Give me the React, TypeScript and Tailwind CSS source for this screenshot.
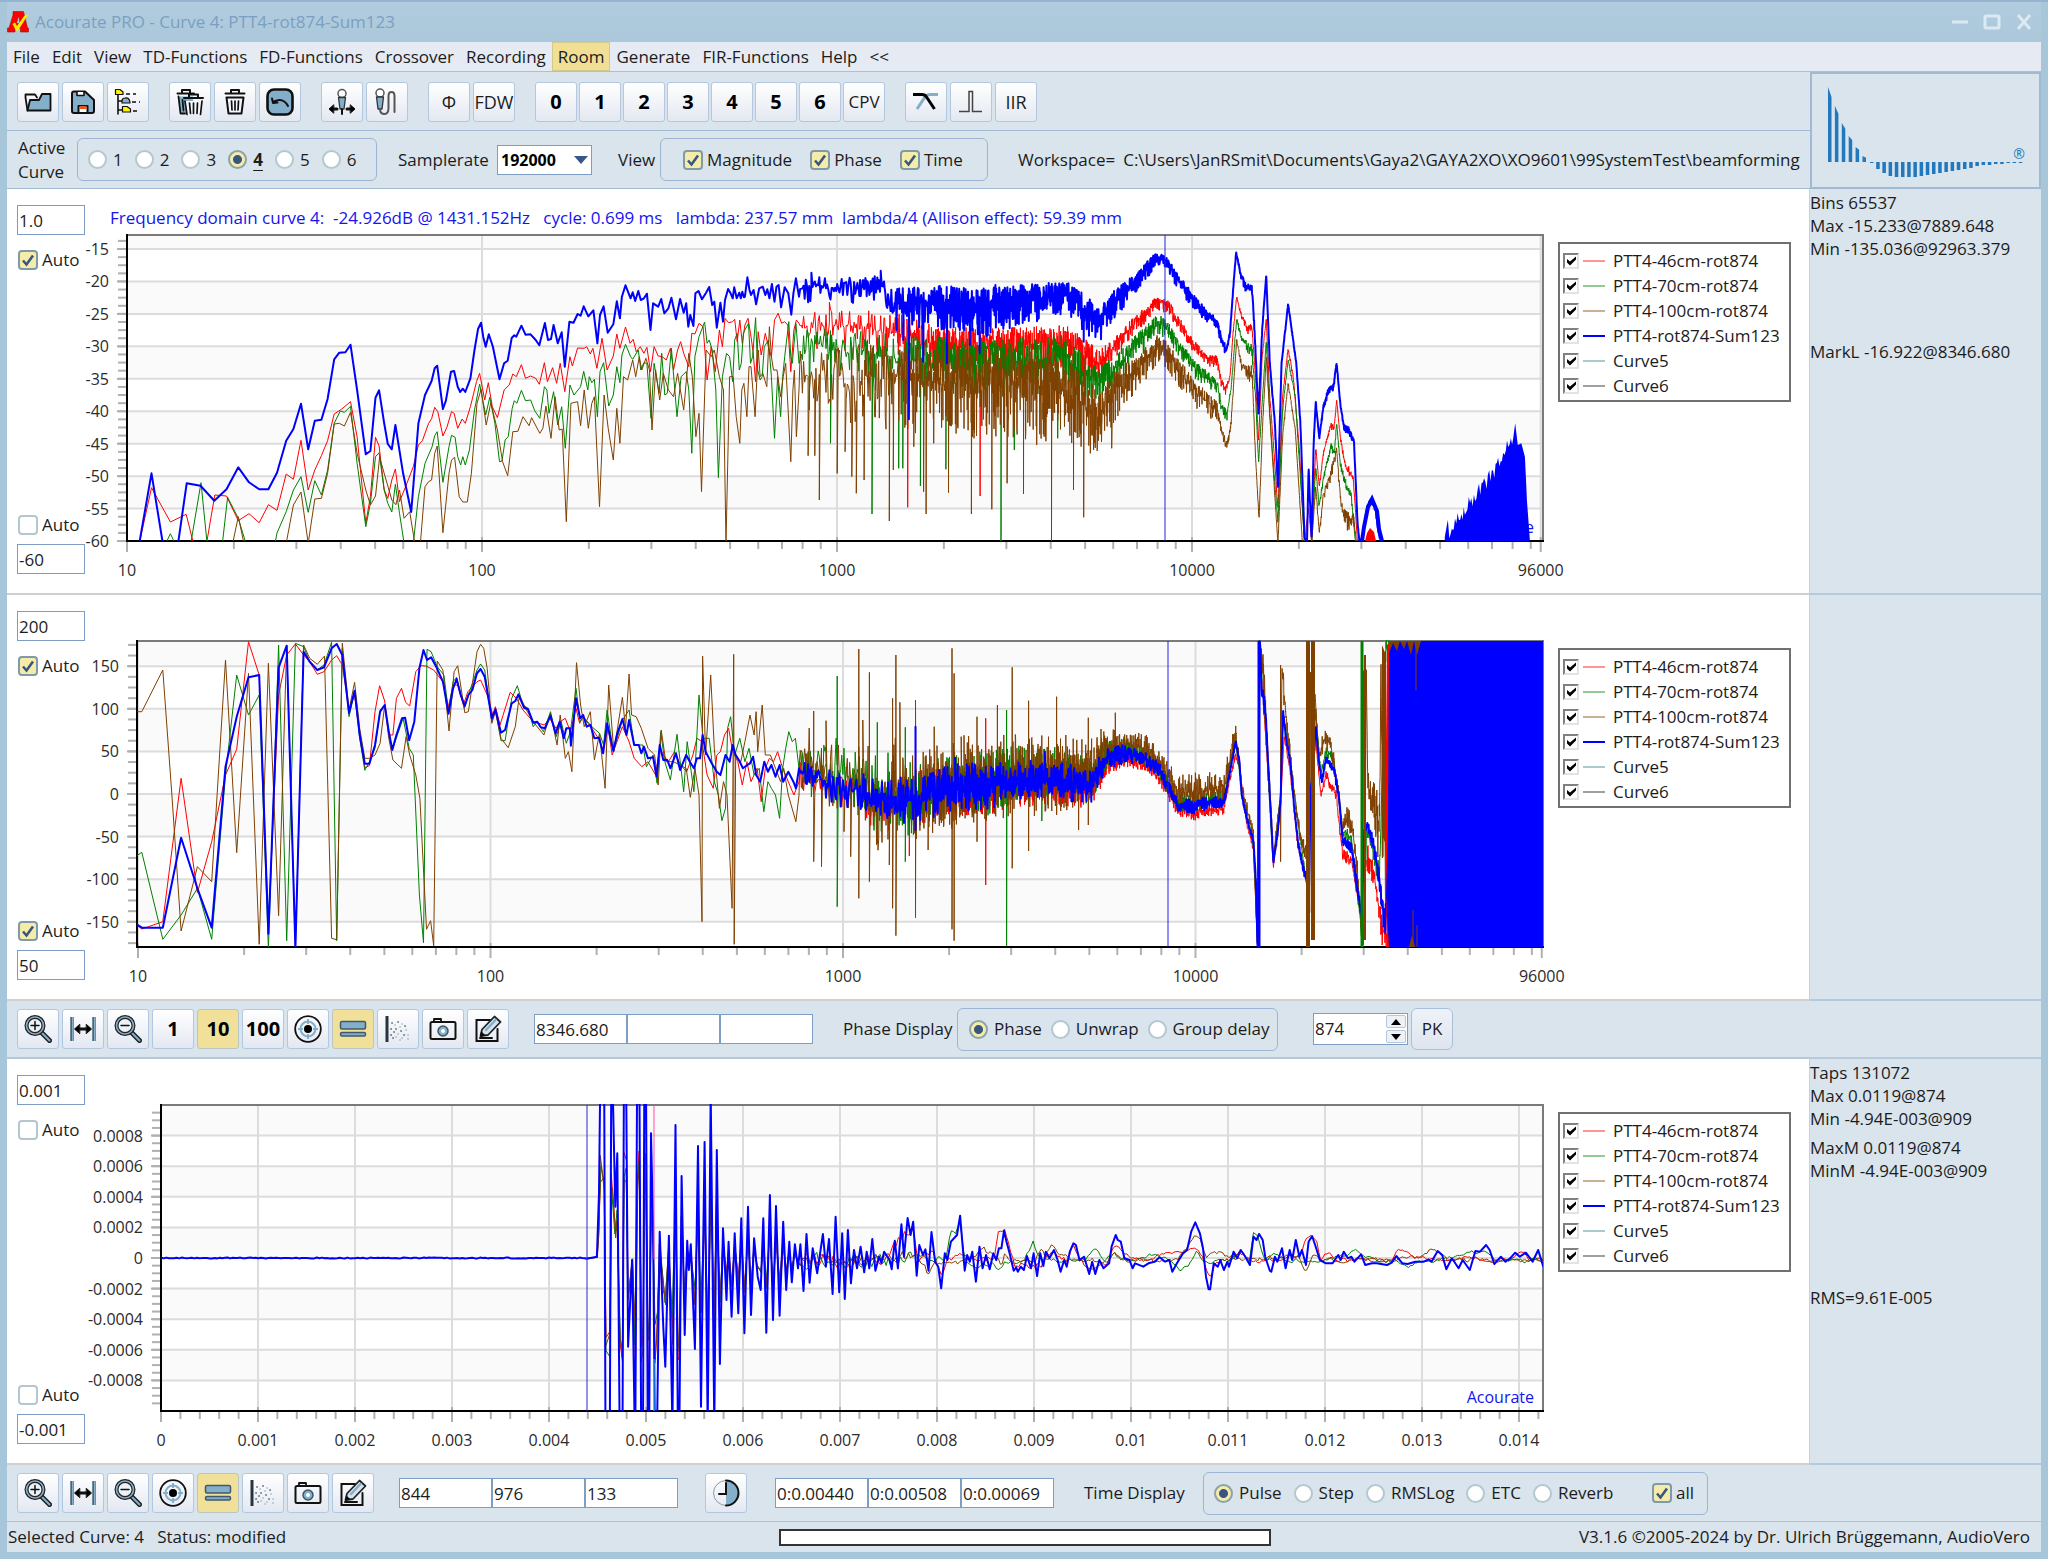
import React, { useState } from "react";

type Pt = [number, number];

/* ------------------------------------------------------------------ */
/* Curve data                                                          */
/* ------------------------------------------------------------------ */

/** Parses "x,y x,y ..." into a list of points. */
const parse = (s: string): number[][] =>
  s.trim().split(/\s+/).map((p) => p.split(",").map(Number));

/** Small seeded generator, so that the noise floor is stable. */
function rng(seed: number) {
  let a = seed;
  return () => {
    a = (a + 0x6d2b79f5) | 0;
    let t = Math.imul(a ^ (a >>> 15), 1 | a);
    t = (t + Math.imul(t ^ (t >>> 7), 61 | t)) ^ t;
    return ((t ^ (t >>> 14)) >>> 0) / 4294967296;
  };
}

/** Raw samples are stored on a fine grid; these bring them to chart units. */
const GX = 1.96;
const GY = 3;
const place = (pts: number[][], dx: number, dy: number): Pt[] =>
  pts.map(([x, y]) => [x / GX + dx, y / GY + dy]);

const toPath = (pts: Pt[]) =>
  pts.map(([x, y], i) => `${i ? "L" : "M"}${x.toFixed(1)} ${y.toFixed(1)}`).join("");

/** The upper half of each curve continues where the lower half stops. */
const SEAM = 38;
const afterSeam = (pts: number[][]) => pts.filter(([x]) => x >= SEAM);

/** Noise in -1..1: "dips" has a long tail downwards, "even" has one on both sides. */
type Shape = "dips" | "even" | "flat";
const shaped = (n: number, shape: Shape) => {
  if (shape === "flat") return n;
  if (shape === "dips") return n > 0 ? Math.pow(n, 2.4) * 1.5 : -Math.pow(-n, 1.3);
  return n * Math.abs(n) * 1.35;
};

/** Walks an envelope of "x,centre,amplitude" and adds noise and spikes. */
function band(env: string, seed: number, shape: Shape, spikes = ""): number[][] {
  const e = parse(env);
  const sp = spikes ? parse(spikes).sort((a, b) => a[0] - b[0]) : [];
  const rand = rng(seed);
  const out: number[][] = [];
  let k = 0;
  let s = 0;
  let prev = 0;
  let x = e[0][0];
  const end = e[e.length - 1][0];
  while (x <= end) {
    while (k < e.length - 2 && e[k + 1][0] < x) k++;
    const [x0, c0, a0 = 4] = e[k];
    const [x1, c1, a1 = 4] = e[k + 1];
    const t = x1 === x0 ? 0 : (x - x0) / (x1 - x0);
    const n = shaped(rand() * 2 - 1, shape);
    prev = shape === "flat" ? prev * 0.4 + n * 0.8 : n;
    out.push([x, c0 + (c1 - c0) * t + prev * (a0 + (a1 - a0) * t)]);
    while (s < sp.length && sp[s][0] <= x) {
      sp[s].slice(1).forEach((y) => out.push([x, y]));
      s++;
    }
    if (shape === "flat") x += 4;
    else x += x < 150 ? 2.2 : x < 230 ? 1.3 : x < 300 ? 0.8 : 0.5;
  }
  return afterSeam(out);
}

const MAG_BLUE = `273,1060 297,850 319,1060 349,1060 366,880 393,887 420,932 444,898 467,832 488,877 508,898 526,898 543,848 561,752 575,717 590,641 604,778 617,692 630,689 642,627 655,508 665,488 677,487 687,464 700,600 717,793 726,783 736,623 743,601 753,700 760,762 768,778 775,705 790,850 806,966 820,700 833,615 846,573 852,535 857,527 868,657 874,632 884,545 890,543 897,590 902,606 907,596 912,606 922,565 930,480 937,416 943,398 947,440 952,470 958,433 966,470 979,568 988,520 995,512 1003,444 1008,436 1012,440 1022,407 1030,434 1040,433 1050,450 1057,466 1068,399 1074,450 1080,447 1085,405 1093,460 1101,427 1107,530 1116,395 1124,398 1132,372 1138,377 1144,349 1153,379 1163,361 1171,460 1176,375 1183,349 1191,428 1202,403 1209,334 1215,385 1219,320 1226,286 1236,325 1240,307 1245,333 1251,303 1256,330 1262,325 1268,311 1275,420 1280,340 1290,350 1296,327 1302,370 1310,355 1316,323 1325,388 1333,327 1340,368 1345,340 1349,410 1353,375 1359,408 1363,310 1369,303 1376,328 1384,308 1390,291 1396,345 1400,335 1405,413 1412,338 1417,395 1421,330 1427,297 1432,310 1436,325 1439,292 1444,325 1449,308 1452,325 1455,305 1458,322 1460,320 1465,262 1469,300 1472,315 1477,300 1482,343 1488,295 1495,290 1500,315 1504,298 1508,325 1513,282 1518,335 1522,290 1526,285 1531,352 1538,292 1545,310 1551,374 1555,310 1560,265 1566,320`;
const MAG_RED = `273,1060 297,893 334,996 365,973 379,1060 405,1060 421,915 444,918 467,992 488,971 508,998 526,944 543,961 561,852 575,868 590,751 604,900 617,840 630,797 642,752 655,672 670,657 687,635 700,740 717,1000 726,920 736,742 743,768 753,900 760,925 768,870 775,837 783,935 795,890 810,830 820,765 828,752 840,700 846,686 852,652 858,665 868,738 876,712 885,665 890,670 897,715 906,687 912,700 922,650 934,575 940,550 950,630 957,578 965,650 975,683 988,600 998,585 1005,552 1012,560 1022,524 1030,565 1040,558 1050,565 1057,583 1067,518 1073,575 1083,533 1091,580 1098,520 1107,605 1117,500 1122,528 1132,474 1145,475 1150,470 1157,492 1162,475 1170,535 1180,445 1190,540 1202,498 1209,432 1215,475 1226,411 1235,460 1241,448 1247,485 1255,470 1262,490 1268,472 1275,545 1282,470 1290,498 1298,500 1306,510 1314,475 1320,540 1328,480 1334,455 1340,490 1350,530 1356,430 1362,432 1370,400 1378,410 1386,570 1394,470 1402,545 1410,420 1416,470 1421,385 1428,398 1436,395 1440,388 1445,455 1450,390 1455,460 1460,405 1466,385 1471,430 1476,485 1481,575 1486,425 1492,495 1500,430 1506,470 1512,500 1518,390 1525,370 1532,400 1538,395 1544,405 1550,545 1556,420 1561,390 1566,400`;
const MAG_GREEN = `325,1060 334,1031 343,1060 374,1060 394,878 406,1060 436,1060 446,922 467,985 482,1060 539,1060 543,1029 561,965 575,900 590,860 604,967 617,872 630,915 642,840 655,700 667,663 675,667 687,649 700,820 717,1010 726,940 736,800 743,788 753,900 760,940 768,966 775,883 783,970 792,1060 810,1060 820,920 833,820 847,770 852,737 857,725 868,877 880,770 885,736 892,742 897,800 903,825 907,800 912,825 920,780 930,660 940,582 952,675 960,622 970,700 979,815 984,813 990,750 996,740 1004,655 1008,632 1013,640 1022,601 1030,632 1040,630 1048,662 1058,685 1067,590 1072,600 1076,670 1085,605 1093,705 1101,650 1108,775 1117,585 1125,615 1138,590 1144,544 1152,600 1155,560 1160,578 1165,568 1171,680 1176,545 1183,518 1193,648 1202,615 1209,530 1215,578 1219,495 1226,463 1236,500 1240,508 1251,480 1256,540 1262,518 1268,520 1276,685 1282,520 1292,610 1297,490 1303,615 1308,610 1316,475 1327,680 1335,560 1345,545 1350,600 1356,790 1362,500 1370,440 1381,396 1386,460 1390,450 1396,480 1403,600 1408,863 1416,560 1424,490 1430,500 1436,575 1440,450 1445,430 1449,540 1453,520 1457,430 1460,420 1467,400 1471,520 1475,500 1481,383 1485,540 1490,570 1494,560 1498,470 1506,450 1512,560 1518,745 1524,560 1530,680 1534,560 1538,500 1546,395 1550,500 1553,520 1560,400 1566,520`;
const MAG_BROWN = `456,1060 467,980 478,1060 561,1060 575,945 590,906 604,1060 617,927 630,925 642,850 655,702 665,700 675,708 687,667 700,790 717,900 726,945 736,918 744,802 753,850 768,930 776,944 783,900 792,985 803,965 813,1060 824,1060 833,890 840,875 846,870 852,790 857,768 868,1028 880,850 885,810 891,802 900,920 907,936 916,936 924,850 935,640 943,598 953,705 962,638 975,720 985,815 995,857 1005,725 1015,724 1025,680 1037,707 1042,683 1058,730 1064,715 1070,648 1080,745 1088,620 1096,720 1102,717 1110,995 1119,640 1132,635 1138,707 1145,600 1153,715 1160,640 1165,620 1175,950 1184,615 1192,715 1202,810 1209,655 1215,760 1222,560 1230,570 1240,510 1246,560 1253,500 1258,540 1266,505 1273,540 1278,720 1285,540 1293,630 1300,550 1310,600 1320,620 1328,550 1340,660 1350,490 1357,560 1364,740 1370,670 1375,905 1384,480 1394,500 1400,480 1410,560 1418,600 1423,1060 1430,560 1437,560 1443,680 1450,760 1454,600 1458,580 1464,680 1468,530 1472,530 1480,680 1486,480 1490,560 1495,550 1503,590 1508,410 1512,500 1516,540 1523,540 1530,620 1535,560 1540,520 1550,815 1554,600 1557,540 1561,740 1566,600`;

const MAG_BLUE_HI = `0,310,30 60,290,30 110,295,32 200,290,35 215,340,55 330,340,52 400,355,60 470,335,50 560,315,40 585,340,45 600,370,48 625,390,45 660,330,35 700,270,22 737,203,18 755,210,16 780,270,18 810,330,18 840,380,14 857,395,12 866,460,14 875,478,10 882,430,6 888,300,4 894,187,2 903,255,8 915,295,12 925,290,10 930,420,8 938,680,5 945,420,5 953,255,3 960,520,5 970,700,5 976,900,5 983,520,4 996,342,3 1003,420,4 1012,520,4 1020,700,4 1028,1040,4 1033,1060,2 1036,830,4 1042,1050,4 1046,760,4 1050,635,4 1057,745,4 1065,650,6 1075,600,8 1085,590,8 1091,518,3 1098,640,4 1105,710,8 1115,720,8 1125,755,6 1132,1000,3 1136,1060,1 1142,1040,6 1150,960,10 1157,930,6 1167,955,6 1173,1030,6 1180,1060,1`;
const MAG_RED_HI = `0,420,50 100,405,50 220,425,60 300,460,55 400,475,60 560,455,50 600,495,48 625,520,38 660,460,34 700,395,22 740,335,18 760,345,18 810,465,17 840,510,14 857,510,14 866,580,14 873,600,10 882,560,5 888,430,5 895,320,4 905,380,6 917,415,12 925,410,8 932,560,6 938,760,6 945,500,5 953,385,5 960,620,6 968,780,6 976,960,5 985,620,5 996,475,5 1006,560,5 1018,780,5 1028,1060,5 1036,950,5 1042,1060,5 1050,770,5 1057,890,6 1065,790,8 1080,705,9 1086,715,8 1091,630,4 1098,740,5 1108,830,12 1115,840,12 1124,870,8 1132,1060,2`;
const MAG_GREEN_HI = `0,490,65 100,480,65 250,510,75 400,520,75 560,505,70 600,555,60 625,585,50 660,530,42 700,465,34 740,400,28 760,415,26 810,530,22 857,585,18 866,655,14 876,675,14 884,600,6 895,385,5 905,450,8 925,480,18 932,620,6 938,820,6 945,640,5 953,450,5 960,680,6 976,1000,6 985,660,6 996,510,5 1010,620,5 1028,1060,5 1042,1060,4 1050,830,6 1057,950,8 1065,860,10 1080,770,12 1086,790,10 1091,700,6 1098,820,8 1110,890,16 1120,920,12 1128,1060,2`;
const MAG_BROWN_HI = `0,560,90 100,550,95 250,570,105 400,580,112 560,600,105 600,655,100 625,685,75 660,595,60 700,540,42 740,470,36 760,490,36 810,600,34 857,660,26 866,730,18 876,770,12 884,700,8 895,450,5 905,530,10 925,550,24 932,800,8 939,990,8 946,700,6 953,500,6 965,800,6 976,1060,4 985,740,6 996,580,6 1010,720,6 1024,1060,4 1042,1060,4 1050,890,6 1057,1030,8 1065,920,14 1080,850,16 1091,780,8 1100,950,16 1112,990,25 1124,980,12 1130,1060,2`;

const PH_BLUE = `268,988 278,998 319,998 355,728 387,880 415,998 442,515 464,365 487,247 508,240 526,1016 546,218 562,152 579,1060 595,170 607,200 622,225 635,217 650,160 660,147 671,180 684,354 695,287 705,420 715,506 724,506 735,450 745,350 754,330 762,410 769,465 777,420 788,370 794,368 802,436 812,380 822,220 830,165 837,195 845,187 855,215 868,260 879,356 888,280 895,252 903,300 911,333 918,300 926,285 935,235 942,222 950,245 964,370 971,343 982,413 990,405 1003,325 1010,318 1016,298 1027,338 1035,343 1045,383 1053,380 1060,397 1068,400 1079,362 1089,415 1097,380 1105,430 1110,400 1117,400 1119,452 1129,310 1137,370 1143,360 1150,395 1157,390 1165,430 1174,428 1182,475 1190,385 1202,467 1210,415 1220,372 1228,420 1233,375 1243,450 1252,450 1257,475 1262,455 1270,490 1280,487 1287,545 1293,450 1300,495 1308,495 1314,520 1325,475 1333,525 1345,480 1352,500 1360,520 1366,490 1372,490 1377,420 1383,470 1395,505 1405,530 1412,540 1422,480 1430,500 1436,450 1442,480 1450,500 1456,520 1465,510 1470,505 1476,485 1482,540 1490,560 1498,500 1505,530 1512,510 1520,545 1528,510 1535,560 1545,530 1555,560 1560,580 1566,520`;
const PH_RED = `268,990 278,1002 319,980 355,550 387,893 415,740 442,540 464,463 487,140 508,240 526,1000 546,300 562,180 579,147 595,180 607,200 622,238 635,230 650,195 660,182 671,210 684,345 695,300 705,420 715,518 724,512 735,350 744,272 754,318 762,420 770,420 777,310 787,280 795,322 803,333 815,230 825,212 835,213 850,225 868,260 879,335 888,270 897,270 908,330 917,290 935,260 942,255 955,300 966,360 971,335 980,390 1000,292 1012,310 1025,345 1045,380 1067,390 1077,370 1090,400 1098,380 1108,370 1118,410 1129,340 1136,385 1143,365 1160,400 1175,435 1182,465 1192,400 1200,480 1220,395 1233,440 1243,490 1258,515 1270,500 1285,540 1293,460 1300,480 1310,500 1322,470 1334,510 1346,530 1358,480 1366,430 1376,440 1386,540 1398,580 1405,480 1412,470 1420,420 1428,400 1436,470 1446,500 1455,570 1464,500 1472,560 1484,520 1492,620 1500,520 1508,490 1516,500 1524,470 1532,510 1545,560 1556,600 1566,560`;
const PH_GREEN = `268,782 278,772 319,1033 355,960 387,880 415,1033 442,540 464,240 487,360 508,300 526,1060 546,150 562,1037 579,145 595,155 607,200 622,225 635,210 650,142 660,1037 671,160 684,365 695,290 705,430 715,526 724,500 735,460 745,345 754,330 762,410 769,465 790,370 802,460 810,480 822,900 830,1043 837,163 845,170 857,215 870,240 879,350 888,260 895,247 910,340 920,290 935,225 942,207 950,225 964,380 971,345 982,437 990,437 1003,310 1014,272 1025,330 1035,340 1045,395 1053,380 1065,410 1079,350 1090,425 1100,380 1110,445 1118,410 1129,280 1137,380 1143,365 1160,395 1175,415 1183,450 1190,345 1202,470 1220,375 1233,345 1243,450 1260,450 1267,515 1280,480 1288,565 1295,410 1303,500 1314,555 1327,418 1340,590 1347,440 1360,590 1370,300 1378,430 1390,430 1400,560 1408,600 1415,677 1422,640 1426,400 1432,365 1440,480 1450,430 1460,500 1468,460 1478,540 1488,520 1497,650 1505,560 1512,580 1520,600 1528,670 1534,520 1540,460 1546,410 1553,440 1559,430 1566,520`;
const PH_BROWN = `268,350 278,350 319,225 337,600 355,1008 387,815 415,860 442,195 464,773 487,235 508,1048 526,205 546,962 562,150 579,1060 595,150 607,190 622,208 636,183 650,1030 660,1034 671,145 684,345 695,262 705,400 715,490 724,490 735,480 745,445 754,330 762,430 770,495 787,520 796,425 803,480 815,540 823,610 836,1003 844,977 850,1052 857,198 868,225 880,408 890,230 897,212 911,353 918,350 935,170 942,148 948,160 955,220 964,385 971,350 982,430 996,458 1010,395 1018,300 1030,340 1045,380 1066,420 1079,355 1092,450 1098,360 1108,490 1114,470 1121,530 1130,203 1138,330 1145,395 1157,350 1165,495 1175,415 1186,580 1193,270 1203,470 1220,307 1226,400 1233,237 1238,360 1247,365 1257,400 1270,460 1283,480 1290,570 1296,405 1305,500 1320,500 1345,520 1353,607 1362,520 1370,600 1376,980 1377,183 1383,480 1393,240 1400,460 1410,640 1418,560 1425,600 1435,940 1438,178 1439,1048 1442,480 1452,500 1460,440 1470,360 1478,420 1482,350 1485,470 1494,330 1500,480 1510,480 1520,520 1530,560 1536,520 1545,600 1560,680 1566,600`;

const PH_BLUE_HI = `0,545,30 50,530,35 120,585,38 200,600,50 270,620,55 340,570,55 400,580,52 480,550,42 560,560,42 610,570,42 640,490,24 680,475,20 720,495,17 745,530,16 765,590,14 780,630,14 810,635,16 840,625,14 870,620,12 882,530,8 893,440,5 900,490,5 905,600,6 915,670,6 928,740,6 933,860,6 936,1060,3 938,1060,2 939,140,2 941,140,2 944,300,8 948,310,20 952,360,8 960,600,8 967,800,5 975,720,8 981,620,8 986,350,5 992,430,8 1000,500,8 1008,640,8 1015,740,10 1025,820,10 1033,850,10 1036,960,8 1040,600,10 1046,490,8 1050,390,6 1056,500,8 1062,560,8 1070,490,8 1085,520,10 1095,600,12 1103,740,12 1120,760,12 1130,860,15 1140,960,8 1145,720,12 1152,690,10 1165,760,18 1175,860,22 1185,990,30 1192,900,40`;
const PH_RED_HI = `0,550,40 60,540,50 120,590,45 200,630,60 270,610,65 340,590,55 400,590,55 480,570,45 610,580,45 640,505,28 680,492,18 720,515,16 745,550,16 765,605,16 780,645,16 810,655,17 840,645,15 870,640,14 882,550,8 893,480,8 900,510,6 915,690,8 928,760,8 936,1060,4 939,140,2 948,330,20 960,620,8 967,820,5 981,640,8 988,420,8 1000,530,8 1015,750,10 1033,870,10 1040,640,12 1050,430,8 1060,600,12 1070,540,12 1090,600,16 1103,780,14 1120,795,14 1138,960,8 1146,800,12 1155,790,40 1165,850,30 1180,1000,40 1195,1050,10`;
const PH_GREEN_HI = `0,470,50 30,470,50 60,530,60 120,530,80 200,600,100 270,610,85 340,560,70 400,560,80 480,530,60 560,540,60 610,560,50 640,470,36 680,465,26 720,485,24 745,530,18 780,620,22 810,625,24 870,610,18 893,430,10 905,600,8 928,750,8 936,1060,4 939,140,2 948,300,60 967,800,6 981,600,10 986,350,8 1000,500,10 1033,880,10 1040,600,10 1050,350,10 1060,540,10 1070,470,12 1085,490,12 1103,710,14 1120,730,14 1138,980,10 1141,1060,2 1142,130,2 1143,1060,2 1150,700,15 1175,850,30 1187,160,30 1195,150,30`;
const PH_BROWN_HI = `0,590,50 30,600,60 50,470,80 120,560,90 150,560,90 200,620,120 235,560,105 270,620,105 340,560,105 400,550,95 480,540,95 560,540,80 610,530,75 640,450,50 680,450,36 720,460,34 745,510,28 780,590,42 810,590,42 870,580,38 893,410,25 905,580,20 928,720,15 936,1060,4 939,140,2 948,250,50 960,580,10 967,780,10 981,600,10 984,230,15 988,300,40 1000,480,15 1015,690,20 1033,790,25 1036,140,4 1038,1040,10 1040,140,4 1042,1050,10 1044,140,4 1046,1050,4 1048,280,30 1056,480,20 1068,430,24 1080,450,24 1095,600,20 1103,690,20 1112,665,24 1122,700,24 1132,830,24 1141,1060,4 1144,140,2 1146,1020,30 1149,200,30 1152,560,30 1165,640,60 1175,700,90 1178,160,20 1181,860,150 1184,180,40 1187,1000,30 1192,160,30`;

const TIME_BLUE = `1150,596 1170,590 1174,400 1177,0 1184,0 1187,1200 1195,1200 1198,100 1201,100 1206,440 1210,280 1215,1200 1220,1200 1223,0 1227,0 1231,860 1239,600 1245,1200 1249,0 1253,0 1257,1200 1260,1200 1263,0 1266,0 1270,1200 1272,1200 1276,220 1280,500 1284,1200 1288,1100 1293,515 1300,800 1304,920 1311,527 1318,1100 1324,195 1329,1200 1331,1200 1336,348 1342,825 1347,542 1350,630 1354,553 1362,867 1368,258 1374,1040 1381,246 1387,1100 1393,100 1400,1100 1405,270 1411,912 1417,505 1424,720 1428,545 1434,770 1440,520 1447,760 1453,475 1459,820 1466,440 1472,765 1478,535 1485,650 1491,690 1496,475 1502,818 1509,405 1515,780 1521,438 1528,767 1535,485 1541,690 1547,545 1552,667 1558,553 1564,625`;
const TIME_BLUE_HI = `40,553 46,693 52,522 58,668 64,565 73,640 84,522 90,620 96,537 103,702 109,470 116,697 122,520 127,717 133,510 139,670 145,570 151,625 158,560 165,637 170,575 175,625 181,537 187,632 194,590 199,610 204,575 215,600 219,628 225,542 231,625 238,493 243,590 250,474 256,525 261,485 268,647 273,555 280,585 285,568 291,632 297,516 304,605 310,620 316,685 323,580 328,600 335,545 347,525 353,467 358,560 362,632 367,585 372,605 377,575 384,665 391,560 397,625 404,585 411,628 418,580 424,600 429,565 434,565 439,512 444,545 450,580 458,632 463,622 466,635 472,620 478,630 484,588 492,625 497,580 504,648 510,580 516,618 521,575 528,595 537,570 544,600 550,635 557,600 562,620 568,575 575,550 580,555 587,600 596,590 606,642 612,605 618,642 626,600 634,625 645,610 650,560 658,525 662,540 668,545 675,595 685,600 691,625 696,610 712,620 722,610 734,605 744,592 755,605 763,600 769,635 778,610 790,580 798,570 806,515 814,487 823,520 829,565 835,650 840,688 843,688 850,610 858,620 863,600 870,630 877,605 880,620 889,575 896,595 903,570 912,590 921,615 928,530 934,540 939,522 946,540 951,590 960,632 963,635 970,590 975,605 984,565 991,625 999,570 1004,600 1011,540 1018,590 1023,570 1031,615 1036,545 1043,528 1050,560 1058,600 1070,610 1083,610 1094,585 1099,600 1105,575 1113,595 1120,590 1126,605 1139,583 1147,615 1160,610 1170,610 1178,612 1190,615 1199,608 1208,588 1220,610 1230,612 1245,605 1262,605 1271,598 1277,605 1289,573 1298,585 1306,628 1317,595 1330,625 1338,600 1352,630 1363,573 1372,575 1384,555 1391,570 1400,612 1413,590 1422,605 1431,595 1441,578 1450,590 1462,578 1475,605 1486,570 1496,620`;
const TIME_RED_HI = `0,600,30 100,600,25 200,595,20 240,530,20 260,510,10 270,600,14 300,570,14 315,640,8 330,600,12 350,580,8 370,600,10 400,600,12 420,590,10 428,518,4 440,508,5 450,560,8 460,620,8 480,610,14 490,625,10 510,615,14 530,580,10 560,600,10 575,555,5 590,600,10 610,635,8 640,610,8 650,570,6 660,560,6 675,575,6 690,600,8 720,600,8 760,575,5 790,580,5 815,562,5 828,590,5 842,652,5 855,605,8 880,600,8 900,575,6 925,605,8 960,605,8 1000,595,9 1020,590,8 1030,535,5 1040,522,4 1052,545,6 1060,600,6 1075,575,5 1100,605,14 1130,600,8 1160,600,6 1200,600,6 1210,570,5 1230,580,6 1245,590,8 1290,600,6 1340,590,6 1390,600,5 1430,600,6 1445,580,5 1460,575,4 1470,600,6 1496,600,5`;
const TIME_GREEN_HI = `0,600,25 100,600,25 230,605,20 250,590,25 270,600,15 300,600,14 325,590,10 335,515,4 345,520,5 353,480,4 362,600,8 385,620,8 410,610,12 430,625,8 445,600,10 480,600,8 496,545,4 505,590,8 540,605,8 580,600,6 600,600,6 615,570,6 625,572,6 635,600,8 655,580,8 670,600,8 700,600,8 735,580,5 760,600,6 785,630,5 800,615,5 817,575,5 835,610,6 850,605,8 880,600,8 905,575,6 920,600,6 928,520,4 936,530,5 950,600,6 970,580,8 990,600,10 1020,600,8 1060,600,6 1110,585,6 1130,568,5 1145,590,6 1180,600,8 1215,610,6 1230,625,4 1250,605,6 1290,600,8 1340,585,6 1380,570,6 1400,600,6 1450,600,8 1460,610,5 1480,595,6 1496,600,5`;
const TIME_BROWN_HI = `0,600,25 100,600,20 230,590,20 270,580,20 280,600,15 290,645,6 300,610,10 340,610,8 360,610,8 390,575,8 400,570,10 415,580,10 435,615,8 440,580,6 450,600,8 500,600,10 513,565,5 520,590,6 531,553,4 545,580,8 575,600,8 640,600,8 655,580,5 680,600,8 720,600,8 780,600,8 800,560,5 812,530,5 823,535,5 835,600,8 850,570,6 865,580,10 900,600,8 960,595,8 1015,590,8 1030,635,5 1045,580,5 1060,600,6 1130,600,8 1200,600,8 1260,590,6 1277,565,4 1292,580,6 1310,600,8 1400,600,8 1496,600,6`;

/* ------------------------------------------------------------------ */
/* Charts                                                              */
/* ------------------------------------------------------------------ */

const RED = "#ff0000";
const GREEN = "#008000";
const BROWN = "#7f4000";
const BLUE = "#0000ff";

const LO = -85;
const HI = 695;

type Line = { d: string; color: string; width: number };
const join = (...parts: Pt[][]) => toPath(parts.flat());

const magnitudeLines: Line[] = [
  { color: RED, width: 1, d: join(place(parse(MAG_RED), LO, 1), place(band(MAG_RED_HI, 11, "dips", "95,337 250,952 392,918 230,385 437,610"), HI, 1)) },
  { color: GREEN, width: 1, d: join(place(parse(MAG_GREEN), LO, 1), place(band(MAG_GREEN_HI, 22, "dips", "57,660 99,760 180,972 232,835 240,835 275,888 325,838 433,1060 459,780 544,745"), HI, 1)) },
  { color: BROWN, width: 1, d: join(place(parse(MAG_BROWN), LO, 1), place(band(MAG_BROWN_HI, 33, "dips", "53,797 68,797 76,930 111,850 126,785 139,860 148,910 164,870 213,993 221,840 262,770 281,905 286,972 301,760 330,908 375,972 415,958 445,880 477,912 503,765 532,1060 575,900 595,982 608,790 650,775"), HI, 1)) },
  { color: BLUE, width: 2, d: join(place(parse(MAG_BLUE), LO, 1), place(band(MAG_BLUE_HI, 44, "dips", "60,248 197,242 241,450 252,688 280,515 313,288 327,520 372,465 391,490 422,285 538,288 595,455"), HI, 1)) },
];

const mountain = (() => {
  const r = rng(5);
  const pts: number[][] = [[1303, 1056]];
  const crest = parse("1303,1040 1309,990 1312,1045 1318,1010 1340,965 1370,905 1400,840 1420,780 1437,745 1441,700 1446,765 1453,760 1460,800 1464,930 1470,1056");
  for (let i = 0; i < crest.length - 1; i++) {
    const [x0, y0] = crest[i];
    const [x1, y1] = crest[i + 1];
    for (let x = x0; x < x1; x += 2.5) {
      pts.push([x, y0 + ((y1 - y0) * (x - x0)) / (x1 - x0) + (i > 2 && i < 8 ? (r() - 0.5) * 50 : 0)]);
    }
  }
  pts.push([1470, 1056]);
  return toPath(place(pts, HI, 1)) + "Z";
})();

const phaseLines: Line[] = [
  { color: RED, width: 1, d: join(place(parse(PH_RED), LO, 0), place(band(PH_RED_HI, 51, "even", "253,783 265,315 403,370,870"), HI, 0)) },
  { color: GREEN, width: 1, d: join(place(parse(PH_GREEN), LO, 0), place(band(PH_GREEN_HI, 62, "even", "112,243,935 190,382,745 245,397,800 444,345,1052 513,678"), HI, 0)) },
  { color: BROWN, width: 1, d: join(place(parse(PH_BROWN), LO, 0), place(band(PH_BROWN_HI, 73, "even", "66,348,800 80,815 90,377 124,710 138,785 154,162,910 161,375 175,232,860 213,810 220,310,940 227,180,1022 235,322 265,320,968 290,765 302,395 337,160,1003 341,235,1037 386,365,740 426,330,630 455,217,820 487,317,768 542,305,660 560,420 585,705 604,368,690 657,353 981,210,800"), HI, 0)) },
  { color: BLUE, width: 2, d: join(place(parse(PH_BLUE), LO, 0), place(band(PH_BLUE_HI, 84, "even", "265,395,705 343,488 519,470"), HI, 0)) },
];

const faint = (seed: number, amp: number, hi: string): string => {
  const r = rng(seed);
  const lo = parse(TIME_BLUE).map(([x, y]) => [x + (r() - 0.5) * 2, 594 + (y - 594) * (amp + (r() - 0.5) * 0.2)]);
  return join(place(lo, LO, 1), place(band(hi, seed, "flat"), HI, 1));
};

const idle = (() => {
  const r = rng(9);
  const pts: number[][] = [];
  for (let x = 316; x < 1150; x += 5) pts.push([x, 594 + (r() - 0.5) * 3]);
  return pts;
})();

const timeLines: Line[] = [
  { color: RED, width: 1, d: faint(91, 0.45, TIME_RED_HI) },
  { color: GREEN, width: 1, d: faint(92, 0.4, TIME_GREEN_HI) },
  { color: BROWN, width: 1, d: faint(93, 0.42, TIME_BROWN_HI) },
  { color: BLUE, width: 2, d: join(place(idle, LO, 1), place(parse(TIME_BLUE), LO, 1), place(parse(TIME_BLUE_HI), HI, 1)) },
];

type Tick = { at: number; label?: string };

type ChartProps = {
  id: string;
  title: string;
  left: number;
  yTicks: Tick[];
  xTicks: Tick[];
  yMinor: number[];
  xMinor: number[];
  firstShaded: boolean;
  lines: Line[];
  caption?: string;
  children?: React.ReactNode;
  over?: React.ReactNode;
};

const TOP = 46;
const BOTTOM = 352;
const RIGHT = 1458;

function Chart({ id, title, left, yTicks, xTicks, yMinor, xMinor, firstShaded, lines, caption, children, over }: ChartProps) {
  const edges = [TOP, ...yTicks.map((t) => t.at), BOTTOM];
  return (
    <svg viewBox="0 0 1459 404" role="img" aria-label={title} className="block h-auto w-full overflow-visible text-[16px]">
      <clipPath id={id}>
        <rect x={left} y={TOP - 1} width={RIGHT - left} height={BOTTOM - TOP + 1} />
      </clipPath>
      {edges.slice(0, -1).map((y, i) =>
        (i % 2 === 0) === firstShaded ? (
          <rect key={i} x={left} y={y} width={RIGHT - left} height={Math.max(0, edges[i + 1] - y)} fill="#fafafa" />
        ) : null,
      )}
      <g stroke="#dcdcdc" strokeWidth="2">
        {yTicks.map((t) => (
          <path key={t.at} d={`M${left} ${t.at}H${RIGHT}`} />
        ))}
        {xTicks.map((t) => (
          <path key={t.at} d={`M${t.at} ${TOP}V${BOTTOM}`} />
        ))}
      </g>
      <g stroke="#b0b0b0" strokeWidth="2">
        {yTicks.map((t) => (
          <path key={t.at} d={`M${left - 10} ${t.at}H${left}`} />
        ))}
        {yMinor.map((y) => (
          <path key={y} d={`M${left - 9} ${y}H${left}`} />
        ))}
        {xTicks.map((t) => (
          <path key={t.at} d={`M${t.at} ${BOTTOM - 4}V${BOTTOM + 11}`} />
        ))}
        {xMinor.map((x) => (
          <path key={x} d={`M${x} ${BOTTOM}V${BOTTOM + 8}`} />
        ))}
      </g>
      <path d={`M${left} ${TOP}H${RIGHT}V${BOTTOM}`} fill="none" stroke="#7a7a7a" strokeWidth="2" />
      <path d={`M${left} ${TOP - 1}V${BOTTOM}H${RIGHT + 1}`} fill="none" stroke="#000" strokeWidth="2" />
      {caption && (
        <text x={RIGHT - 9} y="344" textAnchor="end" fill="#1414f0">
          {caption}
        </text>
      )}
      <g clipPath={`url(#${id})`}>
        {lines.map((l) => (
          <path key={l.color} d={l.d} fill="none" stroke={l.color} strokeWidth={l.width} strokeLinejoin="round" />
        ))}
        {over}
      </g>
      {children}
      <g fill="#2b2b2b" textAnchor="end">
        {yTicks.map((t) => (
          <text key={t.at} x={left - 18} y={t.at + 6}>
            {t.label}
          </text>
        ))}
      </g>
      <g fill="#2b2b2b" textAnchor="middle">
        {xTicks.map((t) => (
          <text key={t.at} x={t.at} y="387">
            {t.label}
          </text>
        ))}
      </g>
    </svg>
  );
}

const range = (n: number) => Array.from({ length: n }, (_, i) => i);

const logTicks = (x10: number, decade: number) => {
  const at = (f: number) => x10 + decade * Math.log10(f / 10);
  const xTicks = [10, 100, 1000, 10000, 96000].map((f) => ({ at: at(f), label: String(f) }));
  const xMinor = [10, 100, 1000, 10000].flatMap((d) => range(8).map((i) => at(d * (i + 2)))).filter((x) => x < RIGHT);
  return { xTicks, xMinor };
};

function MagnitudeChart() {
  const at = (v: number) => 60 + (-15 - v) * 6.49;
  return (
    <Chart
      id="clip-magnitude"
      title="Magnitude over frequency"
      left={42}
      yTicks={range(10).map((i) => ({ at: at(-15 - i * 5), label: String(-15 - i * 5) }))}
      yMinor={range(37).map((i) => at(-13.75 - i * 1.25))}
      {...logTicks(42, 355)}
      firstShaded
      lines={magnitudeLines}
      caption="e"
      over={
        <>
          <path d={mountain} fill={BLUE} />
          <path d="M1280 352L1282 344L1285 339L1289 343L1291 352Z" fill={RED} />
          <path d="M1277 352L1279 338L1283 318L1287 310L1292 322L1294 340L1297 352" fill="none" stroke={BLUE} strokeWidth="4" />
          <path d="M1080 46V352" stroke="#2222e6" strokeWidth="1" />
        </>
      }
    >
      <text x="25" y="35" fill="#1414f0" className="text-[17px] whitespace-pre">
        {"Frequency domain curve 4:  -24.926dB @ 1431.152Hz   cycle: 0.699 ms   lambda: 237.57 mm  lambda/4 (Allison effect): 59.39 mm"}
      </text>
    </Chart>
  );
}

function PhaseChart() {
  const at = (v: number) => 199 - v * 0.852;
  return (
    <Chart
      id="clip-phase"
      title="Phase over frequency"
      left={52}
      yTicks={range(7).map((i) => ({ at: at(150 - i * 50), label: String(150 - i * 50) }))}
      yMinor={range(29).map((i) => at(175 - i * 12.5))}
      {...logTicks(53, 352.5)}
      firstShaded
      lines={phaseLines}
      over={
        <>
          <path d="M1083 46V352" stroke="#2222e6" strokeWidth="1" />
          <path d="M1223 46V352M1228 46V345" stroke={BROWN} strokeWidth="4" />
          <path d="M1277 46V352" stroke={GREEN} strokeWidth="3" />
          <path d="M1280 60V345" stroke={BROWN} strokeWidth="2" />
          <path d="M1174 46V352" stroke={BLUE} strokeWidth="3" />
          <path d="M1297 240V50L1301 60V250Z" fill={BROWN} />
          <path d="M1300 250L1302 50L1306 46V352H1302Z" fill={RED} />
          <path d="M1305 46H1340V352H1305Z" fill={BROWN} />
          <path d="M1304 352L1301 300L1303 230L1304 58L1308 48L1312 56L1315 46L1319 54L1322 46L1326 60L1329 46L1332 60L1336 46H1459V352H1330L1327 340L1324 352Z" fill={BLUE} />
          <path d="M1331 48V95M1328 315V352M1332 330V352" stroke={BROWN} strokeWidth="1" />
        </>
      }
    />
  );
}

function TimeChart() {
  const at = (i: number) => 199 - i * 30.6;
  const label = (i: number) => (i === 0 ? "0" : (i * 0.0002).toFixed(4));
  return (
    <Chart
      id="clip-time"
      title="Pulse response over time"
      left={76}
      yTicks={range(9).map((i) => ({ at: at(4 - i), label: label(4 - i) }))}
      yMinor={range(39).map((i) => at((19 - i) / 4))}
      xTicks={range(15).map((i) => ({ at: 76 + i * 97, label: String(Number((i * 0.001).toFixed(3))) }))}
      xMinor={range(72).map((i) => 76 + i * 19.4)}
      firstShaded
      lines={timeLines}
      caption="Acourate"
      over={
        <>
          <path d="M502 46V352" stroke="#2a2ad0" strokeWidth="1" />
          <path d="M569 46V200" stroke="#ff4fa0" strokeWidth="1" />
          <path d="M569 300V352" stroke="#20d0c0" strokeWidth="1" />
        </>
      }
    />
  );
}

/* ------------------------------------------------------------------ */
/* Controls                                                            */
/* ------------------------------------------------------------------ */

function Check({ label, defaultChecked }: { label: string; defaultChecked?: boolean }) {
  return (
    <label className="flex h-5 items-center gap-1">
      <span className="relative block size-5 shrink-0">
        <input
          type="checkbox"
          defaultChecked={defaultChecked}
          className="peer block size-5 appearance-none rounded border-2 border-[#b4c6ce] bg-white checked:border-[#7f9aa8] checked:bg-[#f6ecaa]"
        />
        <svg viewBox="0 0 20 20" className="pointer-events-none absolute inset-0 hidden size-5 peer-checked:block">
          <path d="M5 10.5L8.5 14.5L15 5.5" fill="none" stroke="#39567f" strokeWidth="2.6" />
        </svg>
      </span>
      <span>{label}</span>
    </label>
  );
}

function Radio({ name, label, defaultChecked, strong }: { name: string; label: string; defaultChecked?: boolean; strong?: boolean }) {
  return (
    <label className="flex items-center gap-[6px]">
      <input
        type="radio"
        name={name}
        defaultChecked={defaultChecked}
        className="block size-[19px] shrink-0 appearance-none rounded-full border-2 border-[#b4c8d0] bg-white checked:border-[#8aa3ab] checked:bg-[radial-gradient(circle,#39567f_0_4px,#f6ecaa_5px)]"
      />
      <span className={strong ? "font-bold underline underline-offset-4" : ""}>{label}</span>
    </label>
  );
}

function Tool({ label, children, active }: { label: string; children: React.ReactNode; active?: boolean }) {
  return (
    <button
      type="button"
      aria-label={label}
      className={
        active
          ? "flex h-10 w-[42px] shrink-0 items-center justify-center rounded-[3px] border border-[#b9c6c4] bg-[#f0e09a]"
          : "flex h-10 w-[42px] shrink-0 items-center justify-center rounded-[3px] border border-[#b3c7de] bg-linear-to-b from-white to-[#e3e8f1]"
      }
    >
      {children}
    </button>
  );
}

const Bold = ({ children }: { children: string }) => <span className="text-[20px] font-bold text-black">{children}</span>;

function Field({ label, value, narrow }: { label: string; value: string; narrow?: boolean }) {
  return (
    <input
      aria-label={label}
      defaultValue={value}
      className={
        narrow
          ? "h-[30px] w-[68px] border border-[#7d9dc4] bg-white px-[1px] outline-none"
          : "h-[30px] w-[93px] border border-[#7d9dc4] bg-white px-[1px] outline-none"
      }
    />
  );
}

/* ------------------------------------------------------------------ */
/* Icons                                                               */
/* ------------------------------------------------------------------ */

const STEEL = "#84afcb";
const Icon = ({ children }: { children: React.ReactNode }) => (
  <svg viewBox="0 0 28 28" className="size-7 shrink-0" fill="none" stroke="#111" strokeWidth="2" strokeLinecap="round" strokeLinejoin="round" aria-hidden="true">
    {children}
  </svg>
);

const FolderIcon = () => (
  <Icon>
    <path d="M3.500 22.500L1.500 9.500V6.500H11L13 9.500" fill="#f4f7fa" strokeWidth="1.800" />
    <path d="M3.500 22.500L6 12H15L18 6H26.500V22.500Z" fill={STEEL} strokeWidth="1.800" />
  </Icon>
);
const SaveIcon = () => (
  <Icon>
    <path d="M3 5.500Q3 3.500 5 3.500H16L25 12V23Q25 25 23 25H5Q3 25 3 23Z" fill={STEEL} />
    <path d="M8 4V7.500H15V4" fill="#fff" strokeWidth="1.600" />
    <path d="M9.500 25V18H18.500V25Z" fill="#fff" />
    <path d="M10.500 19.500H17.500" stroke="#e8541c" strokeWidth="3" strokeLinecap="butt" />
  </Icon>
);
const TreeIcon = () => (
  <Icon>
    <path d="M4 7V26M4 13H8M4 22H8" strokeWidth="1.600" />
    <path d="M12 6H22M18 14H26M19 23H26" strokeDasharray="4 3" strokeWidth="1.400" strokeLinecap="butt" />
    <path d="M1.500 1.500H6L9 4V6.500H1.500Z" fill="#fff200" strokeWidth="1.200" />
    <path d="M8 13Q8 10 11 10Q15 9 16 14V15H8Z" fill={STEEL} strokeWidth="1.200" />
    <path d="M8.500 18.500H13L16.500 21V24H8.500Z" fill="#fff200" strokeWidth="1.200" />
  </Icon>
);
const TrashesIcon = () => (
  <Icon>
    <path d="M1.500 5.500H18M6 5V2H14V5" />
    <path d="M2.500 8.500H17V25.500H4.500Z" fill={STEEL} stroke="none" />
    <path d="M2.500 8.500L4.500 25.500H9M6.500 12L7.500 22.500" strokeWidth="1.800" />
    <path d="M8 10H27M13 9V6.500H22V9" />
    <path d="M9 13H26L24.500 27H11Z" fill="#f4f7fa" stroke="none" />
    <path d="M9 13L11 26.500M26 13L24.500 26.500M13.500 15L14.500 25.500M17.500 15V25.500M21.500 15L21 25.500" strokeWidth="1.700" />
  </Icon>
);
const TrashIcon = () => (
  <Icon>
    <path d="M4.500 5.500H23.500M10 5V2H18V5" />
    <path d="M5.500 9.500H22.500L20.500 25.500H7.500Z" fill="#f2f5f9" />
    <path d="M10.500 13L11 22M14 13V22M17.500 13L17 22" strokeWidth="1.700" />
  </Icon>
);
const UndoIcon = () => (
  <Icon>
    <rect x="1.500" y="1.500" width="25" height="25" rx="6.500" fill={STEEL} strokeWidth="2.600" />
    <path d="M22 18Q17 9 8 13.500M6 10.500L7 15L11.500 14.500" strokeWidth="2" />
  </Icon>
);
const MicArrowsIcon = () => (
  <Icon>
    <circle cx="14" cy="5.500" r="4" fill="#fff" stroke="#555" strokeWidth="1.500" />
    <path d="M10.500 9.500H17.500L16 21H12Z" fill={STEEL} stroke="#333" strokeWidth="1.300" />
    <path d="M14 21V26" strokeWidth="2" />
    <path d="M9 21H3M19 21H25" strokeWidth="3" />
    <path d="M5.500 17L1 21L5.500 25ZM22.500 17L27 21L22.500 25Z" fill="#000" strokeWidth="1" />
  </Icon>
);
const MicCableIcon = () => (
  <Icon>
    <circle cx="7" cy="5" r="4" fill="#fff" stroke="#555" strokeWidth="1.500" />
    <path d="M3.500 9H10.500L9 21H5Z" fill={STEEL} stroke="#333" strokeWidth="1.300" />
    <path d="M7 21Q7 26 11.500 26Q15.500 26 15.500 20V8Q15.500 4 18.500 4Q21.500 4 21.500 8V24" stroke="#555" strokeWidth="2" />
  </Icon>
);
const CrossIcon = () => (
  <Icon>
    <path d="M5 21L13 9Q15 6.500 18 6.500H26" stroke={STEEL} strokeWidth="3" strokeLinecap="butt" />
    <path d="M1 6.500H10Q13 6.500 14.500 9L22.500 21" stroke="#000" strokeWidth="3" strokeLinecap="butt" />
  </Icon>
);
const PulseIcon = () => (
  <Icon>
    <path d="M2 23.500H12V3.500H15.500V23.500H25" stroke="#444" strokeWidth="1.500" strokeLinejoin="miter" strokeLinecap="butt" />
  </Icon>
);
const ZoomIcon = ({ plus }: { plus?: boolean }) => (
  <Icon>
    <path d="M17 17L25.500 25.500" stroke="#222" strokeWidth="5" />
    <path d="M17 17L25.500 25.500" stroke={STEEL} strokeWidth="2" />
    <circle cx="11" cy="10.500" r="8.500" stroke="#222" strokeWidth="4" fill="#eef2f7" />
    <circle cx="11" cy="10.500" r="8.500" stroke={STEEL} strokeWidth="1.600" />
    <path d={plus ? "M7 10.500H15M11 6.500V14.500" : "M7 10.500H15"} strokeWidth="1.500" />
  </Icon>
);
const WidthIcon = () => (
  <Icon>
    <path d="M3 2V26M25 2V26" stroke="#4a5d6b" strokeWidth="3.400" strokeLinecap="butt" />
    <path d="M3.500 2V26M25.500 2V26" stroke={STEEL} strokeWidth="1.200" strokeLinecap="butt" />
    <path d="M8 14H20" strokeWidth="3" />
    <path d="M10.500 9.500L5.500 14L10.500 18.500ZM17.500 9.500L22.500 14L17.500 18.500Z" fill="#000" strokeWidth="1" />
  </Icon>
);
const TargetIcon = () => (
  <Icon>
    <circle cx="14" cy="14" r="12.800" strokeWidth="1.800" />
    <circle cx="14" cy="14" r="7.500" stroke={STEEL} strokeWidth="2" />
    <path d="M14 4V9M14 19V24M4 14H9M19 14H24" stroke={STEEL} strokeWidth="2" strokeLinecap="butt" />
    <circle cx="14" cy="14" r="4" fill="#000" stroke="none" />
  </Icon>
);
const BarsIcon = () => (
  <Icon>
    <rect x="1.500" y="6.500" width="25" height="7.500" rx="1.500" fill={STEEL} stroke="#42586a" strokeWidth="1.500" />
    <rect x="1.500" y="17.500" width="25" height="3.500" rx="1.500" fill={STEEL} stroke="#42586a" strokeWidth="1.500" />
  </Icon>
);
const ScatterIcon = () => (
  <Icon>
    <path d="M3 1V27" strokeWidth="3" stroke="#26343f" strokeLinecap="butt" />
    <g stroke="#333" strokeWidth="1.600">
      <path d="M8 8h.1M7 14h.1M10 17h.1M14 7h.1M12 14h.1M17 16h.1M21 11h.1M9 23h.1M20 20h.1M7 20h.1" />
    </g>
    <g stroke={STEEL} strokeWidth="1.600">
      <path d="M11 10h.1M16 12h.1M14 19h.1M22 15h.1M24 20h.1M12 22h.1M18 23h.1M24 24h.1M18 9h.1M16 25h.1" />
    </g>
  </Icon>
);
const CameraIcon = () => (
  <Icon>
    <path d="M5 7V4H12V7" strokeWidth="1.800" />
    <rect x="1.500" y="7" width="25" height="17" rx="1.500" />
    <circle cx="14" cy="16" r="5" stroke="#3d5567" strokeWidth="1.500" fill={STEEL} />
    <circle cx="14" cy="16" r="2" fill="#fff" stroke="none" />
  </Icon>
);
const EditIcon = () => (
  <Icon>
    <path d="M16 5H2.500V26H23.500V14M6 23H18" strokeLinejoin="miter" />
    <path d="M6.500 21L8 14.500L20.500 1.500L26.500 7L14 20Z" fill="#d5e3ee" stroke="#222" strokeWidth="1.800" />
    <path d="M12 15L21.500 5" stroke={STEEL} strokeWidth="2.500" />
    <path d="M6.500 21L7.500 17L10.500 20Z" fill="#000" strokeWidth="1" />
  </Icon>
);
const ClockIcon = () => (
  <Icon>
    <path d="M14 1.500A12.500 12.500 0 0 1 14 26.500Z" fill={STEEL} stroke="none" />
    <path d="M14 1.500A12.500 12.500 0 0 0 14 26.500" stroke="#8a9aa6" strokeWidth="1" />
    <path d="M14 1.500A12.500 12.500 0 0 1 14 26.500" strokeWidth="2" />
    <path d="M14 4V15H7" strokeWidth="2" strokeLinejoin="miter" />
  </Icon>
);

function AppMark() {
  return (
    <svg viewBox="0 0 22 22" className="h-[22px] w-[22px]" aria-hidden="true">
      <path fillRule="evenodd" d="M0.500 21V17H2L6 4V0.500H16.500L20.500 17H21.500V21H13.500V17H8V21ZM9.500 12.500H13L12 6H11Z" fill="#ff0000" stroke="#a01010" strokeWidth="0.600" />
      <path d="M5.500 13L8 11.500L10 15L17.500 4.500L21.500 3L11 19.500H9Z" fill="#ffee00" />
    </svg>
  );
}

function Logo() {
  const up = [75, 56, 39, 26, 15, 6];
  const down = [1, 7, 11, 14, 15, 15, 15, 15, 14, 13, 12, 11, 10, 9, 8, 7, 6, 4, 3, 3, 2, 2, 1, 1, 1];
  return (
    <svg viewBox="2 2 227 112" className="block h-auto w-full" role="img" aria-label="AudioVero">
      <g fill="#2178bd">
        {up.map((h, i) => (
          <path key={i} d={`M${18 + i * 6.9} 90V${90 - h}L${21.5 + i * 6.9} ${90 - h + h * 0.12 + 1}V90Z`} />
        ))}
        {down.map((h, i) => (
          <rect key={i} x={60 + i * 6.2} y="90" width="3.500" height={h} />
        ))}
      </g>
      <text x="209" y="87" fontSize="14" fill="#2178bd" textAnchor="middle">
        ®
      </text>
    </svg>
  );
}

/* ------------------------------------------------------------------ */
/* Page sections                                                       */
/* ------------------------------------------------------------------ */

const LEGEND = [
  ["PTT4-46cm-rot874", "#ff7070", "1.500"],
  ["PTT4-70cm-rot874", "#70b870", "1.500"],
  ["PTT4-100cm-rot874", "#b89670", "1.500"],
  ["PTT4-rot874-Sum123", "#0000ff", "2"],
  ["Curve5", "#90b8b8", "1.500"],
  ["Curve6", "#808080", "1.500"],
];

function Legend() {
  return (
    <div className="border-2 border-[#707070] bg-white pt-[4px] pb-[2px] pl-[3px]">
      {LEGEND.map(([name, color, width]) => (
        <label key={name} className="flex h-[25px] items-center">
          <span className="relative block size-4 shrink-0">
            <input
              type="checkbox"
              defaultChecked
              className="peer block size-4 appearance-none border-2 border-t-[#808080] border-r-[#e3e3e3] border-b-[#e3e3e3] border-l-[#808080] bg-white"
            />
            <svg viewBox="0 0 16 16" className="pointer-events-none absolute inset-0 hidden size-4 peer-checked:block">
              <path d="M4 6V9.500L7 12.500L13 6.500V3.500L7 8.500Z" fill="#000" />
            </svg>
          </span>
          <svg viewBox="0 0 24 4" className="ml-[4px] h-1 w-6 shrink-0" aria-hidden="true">
            <path d="M0 2H22" stroke={color} strokeWidth={width} />
          </svg>
          <span className="ml-[6px] whitespace-nowrap">{name}</span>
        </label>
      ))}
    </div>
  );
}

type PanelProps = {
  name: string;
  max: string;
  min: string;
  autoMax?: boolean;
  autoMin?: boolean;
  chart: React.ReactNode;
  side?: React.ReactNode;
};

function Panel({ name, max, min, autoMax, autoMin, chart, side }: PanelProps) {
  return (
    <section className="flex">
      <div className="flex min-w-0 flex-1 border-r border-b-2 border-[#cfcfcf] bg-white">
        <div className="flex w-[78px] shrink-0 flex-col pt-4 pb-[19px] pl-[10px]">
          <Field narrow label={`${name} maximum`} value={max} />
          <div className="mt-[15px] ml-[1px]">
            <Check label="Auto" defaultChecked={autoMax} />
          </div>
          <div className="mt-auto mb-[9px] ml-[1px]">
            <Check label="Auto" defaultChecked={autoMin} />
          </div>
          <Field narrow label={`${name} minimum`} value={min} />
        </div>
        <div className="min-w-0 flex-1">{chart}</div>
        <div className="w-[265px] shrink-0 pt-[53px] pr-[18px] pl-[14px]">
          <Legend />
        </div>
      </div>
      <aside className="w-[231px] shrink-0 border-b-2 border-[#b4cadc] pt-[2px] leading-[23px]">{side}</aside>
    </section>
  );
}

const MENU = ["File", "Edit", "View", "TD-Functions", "FD-Functions", "Crossover", "Recording", "Room", "Generate", "FIR-Functions", "Help", "<<"];

export default function App() {
  const [rate, setRate] = useState("192000");
  return (
    <div className="flex min-h-screen flex-col border-t-2 border-[#93b3cf] bg-[#a8c6da] px-[7px] pb-[7px] font-['Open_Sans','Noto_Sans',sans-serif] text-[17px] leading-6 text-[#1c1c1c]">
      <header className="flex h-10 shrink-0 items-center bg-linear-to-b from-[#b0ccde] to-[#abc8da]">
        <AppMark />
        <h1 className="ml-[6px] text-[#7b9fc3]">Acourate PRO - Curve 4: PTT4-rot874-Sum123</h1>
        <div className="ml-auto flex items-center gap-[14px] pr-[8px]">
          <button type="button" aria-label="Minimize">
            <svg viewBox="0 0 18 18" className="size-[18px]"><path d="M1 9H17" stroke="#dce9f2" strokeWidth="3" /></svg>
          </button>
          <button type="button" aria-label="Maximize">
            <svg viewBox="0 0 18 18" className="size-[18px]"><rect x="2" y="3" width="14" height="12" rx="1" fill="none" stroke="#dce9f2" strokeWidth="3" /></svg>
          </button>
          <button type="button" aria-label="Close">
            <svg viewBox="0 0 18 18" className="size-[18px]"><path d="M3 2L15 16M15 2L3 16" stroke="#dce9f2" strokeWidth="3" /></svg>
          </button>
        </div>
      </header>

      <div className="flex flex-1 flex-col bg-[#d9e4ec]">
        <nav className="flex h-[30px] shrink-0 border-b border-[#a9c1d6] bg-[#e6ebf3]">
          {MENU.map((m) => (
            <button
              type="button"
              key={m}
              className={m === "Room" ? "h-[29px] border border-[#d3c98f] bg-[#f1df94] px-[5px]" : "h-[29px] px-[6px]"}
            >
              {m}
            </button>
          ))}
        </nav>

        <div className="flex">
          <div className="min-w-0 flex-1">
            <div className="flex h-[59px] items-center gap-5 border-b border-[#9fbad2] pt-[2px] pl-[10px]">
              <div className="flex gap-[3px]">
                <Tool label="Open"><FolderIcon /></Tool>
                <Tool label="Save"><SaveIcon /></Tool>
                <Tool label="Workspace tree"><TreeIcon /></Tool>
              </div>
              <div className="flex gap-[3px]">
                <Tool label="Delete all curves"><TrashesIcon /></Tool>
                <Tool label="Delete curve"><TrashIcon /></Tool>
                <Tool label="Undo"><UndoIcon /></Tool>
              </div>
              <div className="flex gap-[3px]">
                <Tool label="Microphone alignment"><MicArrowsIcon /></Tool>
                <Tool label="Recorder"><MicCableIcon /></Tool>
              </div>
              <div className="flex gap-[3px]">
                <Tool label="Phase"><span className="text-[18px]">Φ</span></Tool>
                <Tool label="FDW"><span className="text-[18px]">FDW</span></Tool>
              </div>
              <div className="flex gap-[2px]">
                {["0", "1", "2", "3", "4", "5", "6"].map((n) => (
                  <Tool key={n} label={`Macro ${n}`}><Bold>{n}</Bold></Tool>
                ))}
                <Tool label="CPV">CPV</Tool>
              </div>
              <div className="flex gap-[3px]">
                <Tool label="Crossover"><CrossIcon /></Tool>
                <Tool label="Pulse"><PulseIcon /></Tool>
                <Tool label="IIR"><span className="text-[18px]">IIR</span></Tool>
              </div>
            </div>
            <div className="flex h-[58px] items-center border-b border-[#9fbad2] pl-[11px]">
              <div className="w-[59px]">
                <div>Active</div>
                <div>Curve</div>
              </div>
              <fieldset className="flex h-[43px] w-[300px] items-center gap-[12px] rounded-md border border-[#9db5d3] pl-[10px]">
                {["1", "2", "3", "4", "5", "6"].map((n) => (
                  <Radio key={n} name="curve" label={n} strong={n === "4"} defaultChecked={n === "4"} />
                ))}
              </fieldset>
              <label htmlFor="rate" className="ml-[21px] w-[99px]">Samplerate</label>
              <span className="relative block">
                <select
                  id="rate"
                  value={rate}
                  onChange={(e) => setRate(e.target.value)}
                  className="h-[30px] w-[95px] appearance-none border border-[#7d9dc4] bg-white pl-[3px] text-[16px] font-bold text-black outline-none"
                >
                  <option>44100</option>
                  <option>48000</option>
                  <option>96000</option>
                  <option>192000</option>
                </select>
                <svg viewBox="0 0 14 8" className="pointer-events-none absolute top-[11px] right-[4px] h-2 w-[14px]">
                  <path d="M0 0H14L7 8Z" fill="#39568a" />
                </svg>
              </span>
              <span className="ml-[26px] w-[42px]">View</span>
              <fieldset className="flex h-[43px] w-[328px] items-center gap-[18px] rounded-md border border-[#9db5d3] pl-[22px]">
                <Check label="Magnitude" defaultChecked />
                <Check label="Phase" defaultChecked />
                <Check label="Time" defaultChecked />
              </fieldset>
              <span className="ml-[30px] whitespace-nowrap">Workspace=</span>
              <span className="ml-[8px] whitespace-nowrap">{"C:\\Users\\JanRSmit\\Documents\\Gaya2\\GAYA2XO\\XO9601\\99SystemTest\\beamforming"}</span>
            </div>
          </div>
          <div className="w-[231px] shrink-0 border-2 border-[#9fbad2]">
            <Logo />
          </div>
        </div>

        <Panel
          name="Magnitude"
          max="1.0"
          min="-60"
          autoMax
          chart={<MagnitudeChart />}
          side={
            <>
              <p>Bins 65537</p>
              <p>Max -15.233@7889.648</p>
              <p>Min -135.036@92963.379</p>
              <p className="mt-[80px]">MarkL -16.922@8346.680</p>
            </>
          }
        />
        <Panel name="Phase" max="200" min="50" autoMax autoMin chart={<PhaseChart />} />

        <div className="flex h-[58px] items-center border-b-2 border-[#b4cadc] pl-[10px]">
          <div className="flex w-[517px] gap-[3px]">
            <Tool label="Zoom in"><ZoomIcon plus /></Tool>
            <Tool label="Fit width"><WidthIcon /></Tool>
            <Tool label="Zoom out"><ZoomIcon /></Tool>
            <Tool label="From 1 Hz"><Bold>1</Bold></Tool>
            <Tool label="From 10 Hz" active><Bold>10</Bold></Tool>
            <Tool label="From 100 Hz"><Bold>100</Bold></Tool>
            <Tool label="Center"><TargetIcon /></Tool>
            <Tool label="Lines" active><BarsIcon /></Tool>
            <Tool label="Points"><ScatterIcon /></Tool>
            <Tool label="Snapshot"><CameraIcon /></Tool>
            <Tool label="Edit"><EditIcon /></Tool>
          </div>
          <div className="flex">
            <Field label="Left frequency marker" value="8346.680" />
            <Field label="Right frequency marker" value="" />
            <Field label="Frequency difference" value="" />
          </div>
          <span className="ml-[30px] w-[114px] whitespace-nowrap">Phase Display</span>
          <fieldset className="flex h-[43px] w-[321px] items-center gap-[9px] rounded-md border border-[#9db5d3] pl-[11px]">
            <Radio name="phase" label="Phase" defaultChecked />
            <Radio name="phase" label="Unwrap" />
            <Radio name="phase" label="Group delay" />
          </fieldset>
          <div className="ml-[35px] flex h-8 w-[95px] border border-[#7d9dc4] bg-white">
            <input aria-label="Peak position" defaultValue="874" className="min-w-0 flex-1 bg-white px-[1px] outline-none" />
            <div className="flex w-[22px] flex-col gap-[2px] p-[1px]">
              <button type="button" aria-label="Increase" className="flex flex-1 items-center justify-center rounded-xs border border-[#b3c7de] bg-[#eef2f7]">
                <svg viewBox="0 0 10 6" className="h-[6px] w-[10px]"><path d="M0 6L5 0L10 6Z" /></svg>
              </button>
              <button type="button" aria-label="Decrease" className="flex flex-1 items-center justify-center rounded-xs border border-[#b3c7de] bg-[#eef2f7]">
                <svg viewBox="0 0 10 6" className="h-[6px] w-[10px]"><path d="M0 0L5 6L10 0Z" /></svg>
              </button>
            </div>
          </div>
          <button type="button" className="ml-[3px] h-[42px] w-[42px] rounded-md border border-[#a9bfd8] bg-linear-to-b from-[#eef2f8] to-[#dfe5ef]">PK</button>
        </div>

        <Panel
          name="Time"
          max="0.001"
          min="-0.001"
          chart={<TimeChart />}
          side={
            <>
              <p>Taps 131072</p>
              <p>Max 0.0119@874</p>
              <p>Min -4.94E-003@909</p>
              <p className="mt-[6px]">MaxM 0.0119@874</p>
              <p>MinM -4.94E-003@909</p>
              <p className="mt-[104px]">RMS=9.61E-005</p>
            </>
          }
        />

        <div className="flex h-[57px] items-center border-b border-[#a9c1d6] pl-[10px]">
          <div className="flex w-[382px] gap-[3px]">
            <Tool label="Zoom in"><ZoomIcon plus /></Tool>
            <Tool label="Fit width"><WidthIcon /></Tool>
            <Tool label="Zoom out"><ZoomIcon /></Tool>
            <Tool label="Center"><TargetIcon /></Tool>
            <Tool label="Lines" active><BarsIcon /></Tool>
            <Tool label="Points"><ScatterIcon /></Tool>
            <Tool label="Snapshot"><CameraIcon /></Tool>
            <Tool label="Edit"><EditIcon /></Tool>
          </div>
          <div className="flex">
            <Field label="Left sample marker" value="844" />
            <Field label="Right sample marker" value="976" />
            <Field label="Sample count" value="133" />
          </div>
          <div className="mr-[28px] ml-[27px]">
            <Tool label="Clock"><ClockIcon /></Tool>
          </div>
          <div className="flex">
            <Field label="Left time marker" value="0:0.00440" />
            <Field label="Right time marker" value="0:0.00508" />
            <Field label="Time difference" value="0:0.00069" />
          </div>
          <span className="ml-[30px] w-[119px] whitespace-nowrap">Time Display</span>
          <fieldset className="flex h-[43px] w-[505px] items-center gap-[12px] rounded-md border border-[#9db5d3] pl-[10px]">
            <Radio name="time" label="Pulse" defaultChecked />
            <Radio name="time" label="Step" />
            <Radio name="time" label="RMSLog" />
            <Radio name="time" label="ETC" />
            <Radio name="time" label="Reverb" />
            <span className="mr-[13px] ml-auto">
              <Check label="all" defaultChecked />
            </span>
          </fieldset>
        </div>

        <footer className="grid flex-1 grid-cols-[1fr_492px_1fr] items-center pl-[1px]">
          <span className="whitespace-pre">{"Selected Curve: 4   Status: modified"}</span>
          <div role="progressbar" aria-label="Progress" aria-valuenow={0} className="h-[17px] border-2 border-[#333] bg-white" />
          <span className="pr-[11px] text-right">V3.1.6 ©2005-2024 by Dr. Ulrich Brüggemann, AudioVero</span>
        </footer>
      </div>
    </div>
  );
}
